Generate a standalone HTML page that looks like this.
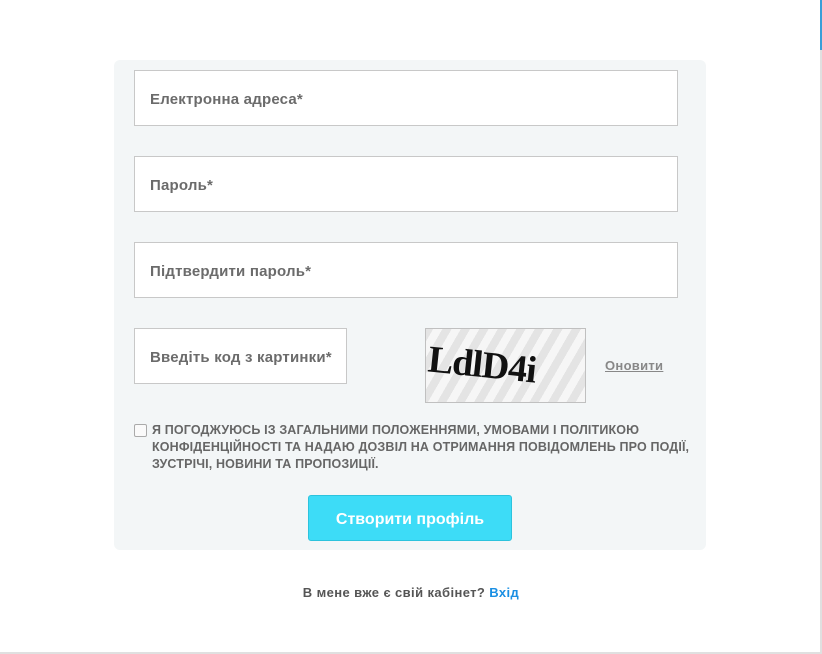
<!DOCTYPE html>
<html><head><meta charset="utf-8"><style>
body{margin:0;width:822px;height:654px;background:#fff;position:relative;overflow:hidden;font-family:"Liberation Sans","DejaVu Sans",sans-serif;}
.panel{position:absolute;left:114px;top:60px;width:592px;height:490px;background:#f3f6f7;border-radius:6px;}
.in{position:absolute;left:134px;width:542px;height:54px;background:#fff;border:1px solid #c8c8c8;font-size:15px;font-weight:bold;color:#6b6b6b;line-height:58px;text-indent:15px;letter-spacing:0.2px;box-sizing:content-box;}
.cap{position:absolute;left:425px;top:328px;width:159px;height:73px;border:1px solid #c0c0c0;background:repeating-linear-gradient(-60deg,#f6f6f6 0 8px,#e4e4e4 8px 16px);overflow:hidden;}
.cap span{position:absolute;left:2px;top:14px;font-family:"Liberation Serif",serif;font-weight:bold;font-size:38px;color:#111;transform:rotate(6deg);letter-spacing:-1px;}
.upd{position:absolute;left:605px;top:358px;font-size:13px;font-weight:bold;color:#888;text-decoration:underline;letter-spacing:0.3px;}
.chk{position:absolute;left:134px;top:424px;width:11px;height:11px;border:1px solid #aaa;border-radius:2px;background:#fafafa;}
.agree{position:absolute;left:152px;top:422px;width:540px;font-size:12.5px;font-weight:bold;color:#666;line-height:17px;letter-spacing:0.15px;}
.btn{position:absolute;left:308px;top:495px;width:202px;height:44px;background:#3ddcf7;border:1px solid #2cc3dd;border-radius:3px;color:#fff;font-weight:bold;font-size:16px;text-align:center;line-height:48px;}
.foot{position:absolute;left:0;width:822px;top:585px;text-align:center;font-size:13px;font-weight:bold;color:#555;letter-spacing:0.4px;}
.foot b{color:#1a8fe3;}
.sb{position:absolute;right:0;top:0;width:2px;height:50px;background:#3a9fd8;}
.sb2{position:absolute;right:0;top:50px;width:2px;height:604px;background:#e0e0e0;}
.bl{position:absolute;left:0;top:652px;width:822px;height:2px;background:#e0e0e0;}
</style></head><body>
<div class="panel"></div>
<div class="in" style="top:70px">Електронна адреса*</div>
<div class="in" style="top:156px">Пароль*</div>
<div class="in" style="top:242px">Підтвердити пароль*</div>
<div class="in" style="top:328px;width:211px">Введіть код з картинки*</div>
<div class="cap"><span>LdlD4i</span></div>
<div class="upd">Оновити</div>
<div class="chk"></div>
<div class="agree">Я ПОГОДЖУЮСЬ ІЗ ЗАГАЛЬНИМИ ПОЛОЖЕННЯМИ, УМОВАМИ І ПОЛІТИКОЮ КОНФІДЕНЦІЙНОСТІ ТА НАДАЮ ДОЗВІЛ НА ОТРИМАННЯ ПОВІДОМЛЕНЬ ПРО ПОДІЇ, ЗУСТРІЧІ, НОВИНИ ТА ПРОПОЗИЦІЇ.</div>
<div class="btn">Створити профіль</div>
<div class="foot">В мене вже є свій кабінет? <b>Вхід</b></div>
<div class="sb"></div><div class="sb2"></div><div class="bl"></div>
</body></html>
